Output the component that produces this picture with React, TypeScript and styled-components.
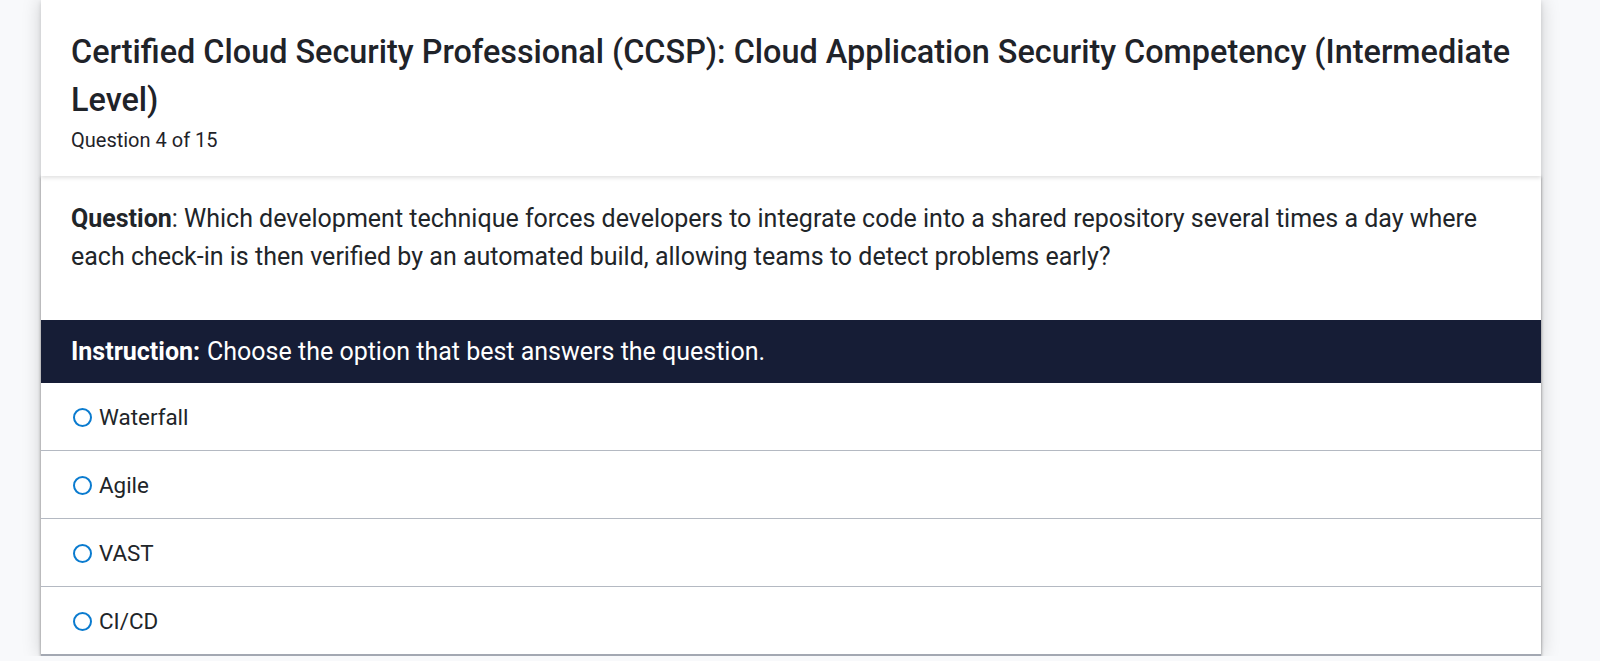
import styled, { createGlobalStyle } from "styled-components";

const GlobalStyle = createGlobalStyle`
  html, body {
    margin: 0;
    padding: 0;
    background-color: #f8f9fb;
    font-family: Roboto, "Liberation Sans", Arial, sans-serif;
    color: #212529;
  }
`;

const Page = styled.div`
  width: 1500px;
  margin: 0 59px 0 41px;
  box-shadow: 0 0 18px rgba(0, 0, 0, 0.18);
`;

const Header = styled.header`
  background-color: #ffffff;
  padding: 28px 16px 24px 30px;
  box-shadow: 0 2px 4px rgba(0, 0, 0, 0.12);
  position: relative;
  z-index: 1;
`;

const Title = styled.h1`
  margin: 0;
  font-size: 32.4px;
  font-weight: 500;
  line-height: 48px;
  color: #1f2329;
`;

const Progress = styled.div`
  margin-top: 4px;
  font-size: 20px;
  line-height: 24px;
  color: #1f2329;
`;

const Card = styled.section`
  background-color: #ffffff;
  box-shadow: 0 1px 3px rgba(0, 0, 0, 0.45);
  border-bottom: 2px solid #a3a8b2;
`;

const QuestionText = styled.p`
  margin: 0;
  padding: 24px 30px 44px;
  font-size: 25px;
  line-height: 38px;
  color: #212529;

  strong {
    font-weight: 700;
  }
`;

const Instruction = styled.div`
  background-color: #161d36;
  color: #ffffff;
  height: 63px;
  padding: 0 30px;
  display: flex;
  align-items: center;
  font-size: 25px;

  strong {
    font-weight: 700;
    margin-right: 7px;
  }
`;

const Options = styled.ul`
  list-style: none;
  margin: 0;
  padding: 0;
`;

const Option = styled.li<{ $last?: boolean }>`
  height: 67px;
  padding: 0 32px;
  display: flex;
  align-items: center;
  gap: 7px;
  font-size: 22.4px;
  color: #212529;
  border-bottom: ${(p) => (p.$last ? "none" : "1px solid #b4b9c2")};
  cursor: pointer;
`;

const Radio = styled.span`
  width: 15px;
  height: 15px;
  border: 2px solid #0a7bcf;
  border-radius: 50%;
  flex-shrink: 0;
  margin-top: 2px;
`;

const options = ["Waterfall", "Agile", "VAST", "CI/CD"];

function App() {
  return (
    <>
      <GlobalStyle />
      <Page>
        <Header>
          <Title>
            Certified Cloud Security Professional (CCSP): Cloud Application
            Security Competency (Intermediate Level)
          </Title>
          <Progress>Question 4 of 15</Progress>
        </Header>
        <Card>
          <QuestionText>
            <strong>Question</strong>: Which development technique forces
            developers to integrate code into a shared repository several times
            a day where each check-in is then verified by an automated build,
            allowing teams to detect problems early?
          </QuestionText>
          <Instruction>
            <strong>Instruction:</strong> Choose the option that best answers
            the question.
          </Instruction>
          <Options>
            {options.map((o, i) => (
              <Option key={o} $last={i === options.length - 1}>
                <Radio />
                {o}
              </Option>
            ))}
          </Options>
        </Card>
      </Page>
    </>
  );
}

export default App;
